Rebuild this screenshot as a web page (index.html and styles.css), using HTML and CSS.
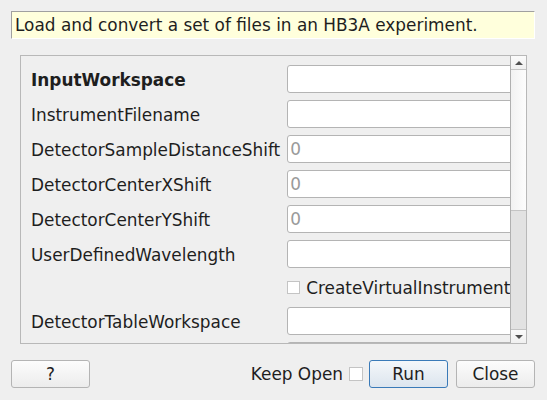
FILE: index.html
```html
<!DOCTYPE html>
<html>
<head>
<meta charset="utf-8">
<link rel="stylesheet" href="styles.css">
</head>
<body>
<div class="dialog">
  <div class="desc">Load and convert a set of files in an HB3A experiment.</div>
  <div class="frame">
    <div class="viewport">
      <div class="form">
        <div class="label bold">InputWorkspace</div><div class="input"></div>
        <div class="label">InstrumentFilename</div><div class="input"></div>
        <div class="label">DetectorSampleDistanceShift</div><div class="input ph">0</div>
        <div class="label">DetectorCenterXShift</div><div class="input ph">0</div>
        <div class="label">DetectorCenterYShift</div><div class="input ph">0</div>
        <div class="label">UserDefinedWavelength</div><div class="input"></div>
        <div class="label"></div><div class="check"><span class="box"></span><span>CreateVirtualInstrument</span></div>
        <div class="label">DetectorTableWorkspace</div><div class="input"></div>
        <div class="label"></div><div class="input"></div>
      </div>
    </div>
    <div class="scrollbar">
      <div class="arrow up"><span class="tri-up"></span></div>
      <div class="handle"></div>
      <div class="trough"></div>
      <div class="arrow down"><span class="tri-down"></span></div>
    </div>
  </div>
  <div class="buttons">
    <button class="btn">?</button>
    <div class="spacer"></div>
    <span class="keep">Keep Open</span><span class="box keepbox"></span>
    <button class="btn run">Run</button>
    <button class="btn">Close</button>
  </div>
</div>
</body>
</html>
```
FILE: styles.css
```css
html, body {
  margin: 0;
  padding: 0;
  background: #efefef;
  font-family: "DejaVu Sans", sans-serif;
  font-size: 16.9px;
  color: #1e1e1e;
}
.dialog {
  width: 547px;
  height: 400px;
  padding: 11px 12px 0 11px;
  box-sizing: border-box;
  display: flex;
  flex-direction: column;
}
.desc {
  height: 28px;
  box-sizing: border-box;
  background: #ffffdc;
  border-top: 1px solid #a0a0a0;
  border-left: 1px solid #a0a0a0;
  border-right: 1px solid #ffffff;
  border-bottom: 1px solid #ffffff;
  padding: 0 0 0 3px;
  line-height: 26px;
  white-space: nowrap;
}
.frame {
  margin: 16px 8px 0 9px;
  height: 289px;
  box-sizing: border-box;
  border: 1px solid #b8b8b8;
  display: flex;
}
.viewport {
  flex: 1;
  overflow: hidden;
  padding: 9px 0 0 10px;
}
.form {
  display: grid;
  grid-template-columns: auto 260px;
  column-gap: 7px;
  row-gap: 7px;
  align-items: center;
}
.label {
  white-space: nowrap;
  padding-top: 1px;
}
.bold { font-weight: bold; }
.input {
  height: 28px;
  box-sizing: border-box;
  background: #fff;
  border: 1px solid #b4b4b4;
  border-radius: 3px;
  padding-left: 2px;
  line-height: 26px;
}
.ph { color: #9a9a9a; }
.check {
  height: 25px;
  display: flex;
  align-items: center;
  gap: 6px;
  white-space: nowrap;
}
.box {
  display: inline-block;
  width: 13px;
  height: 13px;
  box-sizing: border-box;
  background: #fff;
  border: 1px solid #c4c4c4;
}
.scrollbar {
  width: 15px;
  border-left: 1px solid #b0b0b0;
  display: flex;
  flex-direction: column;
  background: #e2e2e2;
}
.arrow {
  height: 13px;
  background: linear-gradient(#fbfbfb, #f0f0f0);
  display: flex;
  align-items: center;
  justify-content: center;
}
.arrow.up { border-bottom: 1px solid #c4c4c4; }
.arrow.down { border-top: 1px solid #c4c4c4; }
.tri-up {
  width: 0; height: 0;
  border-left: 4px solid transparent;
  border-right: 4px solid transparent;
  border-bottom: 4px solid #505050;
}
.tri-down {
  width: 0; height: 0;
  border-left: 4px solid transparent;
  border-right: 4px solid transparent;
  border-top: 4px solid #505050;
}
.handle {
  height: 140px;
  background: linear-gradient(90deg, #f2f2f2, #fdfdfd);
  border-bottom: 1px solid #c4c4c4;
}
.trough { flex: 1; }
.buttons {
  margin-top: 16px;
  display: flex;
  align-items: center;
  height: 28px;
}
.spacer { flex: 1; }
.btn {
  width: 79px;
  height: 28px;
  box-sizing: border-box;
  font-family: "DejaVu Sans", sans-serif;
  font-size: 16.9px;
  color: #1e1e1e;
  border: 1px solid #b4b4b4;
  border-radius: 3px;
  background: linear-gradient(#fcfcfc, #ececec);
  padding: 0;
}
.run {
  border-color: #3a7ab8;
  background: linear-gradient(#f4f7fa, #dce5ee);
  margin: 0 8px 0 6px;
}
.keep { margin-right: 6px; }
.keepbox { width: 14px; height: 14px; }
```
